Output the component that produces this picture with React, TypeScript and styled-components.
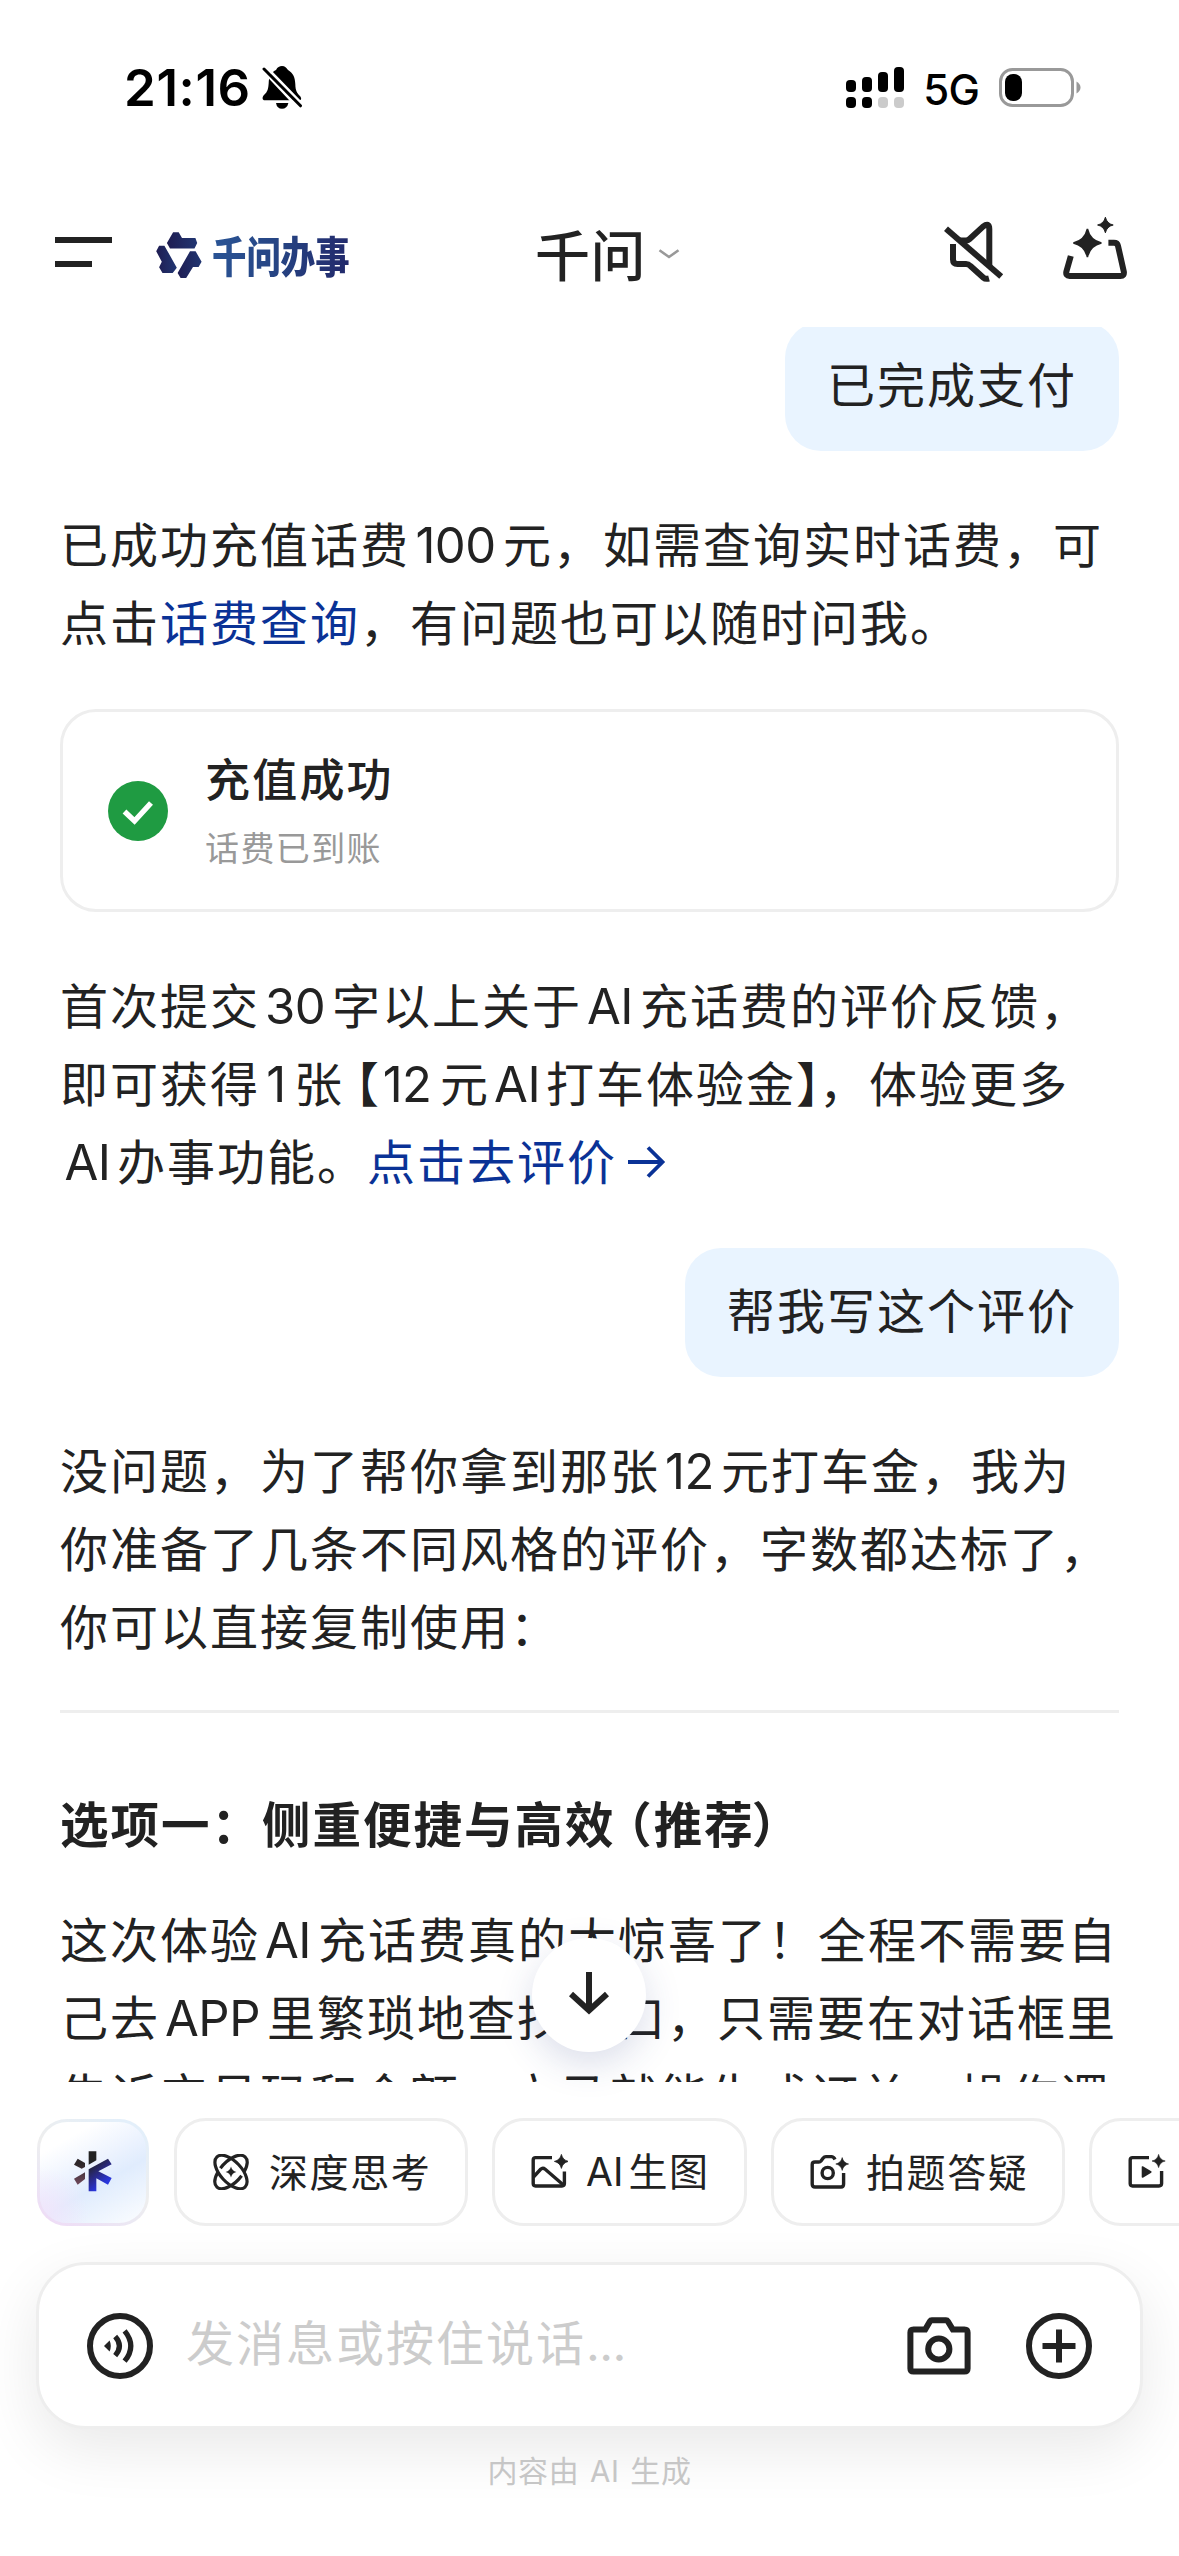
import React from 'react';
import styled, { createGlobalStyle } from 'styled-components';

const CJK = '"Noto Sans CJK SC", "Noto Sans", sans-serif';
const LATIN = 'Inter, "Noto Sans CJK SC", sans-serif';
const INK = '#222222';
const LINK = '#0a3296';

const GlobalStyle = createGlobalStyle`
  * { box-sizing: border-box; }
  html, body { margin: 0; padding: 0; background: #fff; }
  svg { display: block; flex: none; }
`;

const Screen = styled.div`
  position: relative;
  display: flex;
  flex-direction: column;
  width: 1179px;
  height: 2556px;
  overflow: hidden;
  background: #fff;
  color: ${INK};
  font-family: ${CJK};
`;

/* ---------- status bar ---------- */

const StatusBar = styled.header`
  display: flex;
  align-items: center;
  justify-content: space-between;
  height: 176px;
  padding: 0 98px 0 124px;
  color: #000;
  font-family: ${LATIN};
`;

const StatusGroup = styled.div<{ $gap: number }>`
  display: flex;
  align-items: center;
  gap: ${(p) => p.$gap}px;
`;

const Clock = styled.span`
  font-size: 51px;
  font-weight: 600;
  line-height: 60px;
  letter-spacing: 0.6px;
`;

const Network = styled.span`
  font-size: 42px;
  font-weight: 500;
  line-height: 50px;
  letter-spacing: -0.8px;
  margin: 3px 2px 0 -1px;
`;

/* ---------- navigation ---------- */

const NavBar = styled.nav`
  display: flex;
  align-items: center;
  height: 151px;
  padding: 7px 51px 0 55px;
`;

const Brand = styled.div`
  display: flex;
  align-items: center;
  gap: 10px;
  width: 379px;
  margin-left: 44px;
`;

const BrandName = styled.span`
  display: block;
  width: 140px;
  margin-top: -3px;
  font-size: 43px;
  font-weight: 900;
  line-height: 60px;
  white-space: nowrap;
  transform: scaleX(0.8);
  transform-origin: left center;
  background: linear-gradient(100deg, #2a5596 0%, #264382 50%, #22286a 100%);
  background-size: 172px 100%;
  padding-right: 36px;
  box-sizing: content-box;
  -webkit-background-clip: text;
  background-clip: text;
  color: transparent;
`;

const Title = styled.h1`
  display: flex;
  align-items: center;
  gap: 12px;
  margin: -6px 0 0;
  font-size: 55px;
  font-weight: 500;
  line-height: 80px;
  letter-spacing: 0.5px;
`;

const NavActions = styled.div`
  display: flex;
  gap: 56px;
  margin-left: auto;
`;

/* ---------- conversation ---------- */

const Conversation = styled.main`
  height: 1755px;
  overflow: hidden;
  padding: 0 60px;
  font-size: 48px;
  letter-spacing: 2px;
`;

const Thread = styled.div`
  display: flex;
  flex-direction: column;
  margin-top: -5px;
`;

const Bubble = styled.div`
  align-self: flex-end;
  height: 129px;
  padding: 21px 42px 0 42px;
  border-radius: 36px;
  background: #e9f4ff;
  line-height: 78px;
`;

const Paragraph = styled.p<{ $top: number }>`
  margin: ${(p) => p.$top}px 0 0;
`;

const Line = styled.span`
  display: block;
  height: 78px;
  line-height: 78px;
  white-space: nowrap;
`;

const Latin = styled.span<{ $w: number; $trail?: number }>`
  display: inline-block;
  width: ${(p) => p.$w}px;
  padding-right: ${(p) => p.$trail ?? 2}px;
  text-align: center;
  font-family: ${LATIN};
  font-size: 49px;
  line-height: 1;
  letter-spacing: -0.5px;
`;

/* half-width form of a full-width bracket */
const Bracket = styled.span<{ $before?: number; $after?: number }>`
  margin-left: ${(p) => p.$before ?? 0}px;
  margin-right: ${(p) => p.$after ?? 0}px;
  font-feature-settings: 'halt' 1;
`;

const Anchor = styled.a`
  color: ${LINK};
`;

const InlineArrow = styled.svg`
  display: inline-block;
  margin-left: 11px;
  vertical-align: 2px;
`;

const ResultCard = styled.section`
  display: flex;
  align-items: center;
  gap: 37px;
  height: 203px;
  margin-top: 50px;
  padding-left: 45px;
  border: 3px solid #eeeeee;
  border-radius: 36px;
`;

const ResultText = styled.div`
  display: flex;
  flex-direction: column;
  gap: 9px;
  margin-top: -2px;
`;

const ResultTitle = styled.strong`
  font-size: 45px;
  font-weight: 500;
  line-height: 66px;
  letter-spacing: 2.2px;
`;

const ResultNote = styled.span`
  color: #999;
  font-size: 34px;
  line-height: 54px;
  letter-spacing: 1.4px;
`;

const Spacer = styled.div<{ $h: number }>`
  height: ${(p) => p.$h}px;
`;

const Divider = styled.hr`
  width: 100%;
  height: 3px;
  margin: 47px 0 0;
  border: 0;
  background: #eeeeee;
`;

const Heading = styled.h2`
  margin: 70px 0 0;
  font-size: 48.5px;
  font-weight: 600;
  height: 78px;
  line-height: 78px;
  white-space: nowrap;
`;

const ScrollDown = styled.button`
  position: absolute;
  left: 532px;
  top: 1938px;
  display: flex;
  align-items: center;
  justify-content: center;
  width: 114px;
  height: 114px;
  padding: 0 0 4px;
  border: 0;
  border-radius: 50%;
  background: #fff;
  box-shadow: 0 12px 36px rgba(40, 60, 130, 0.17);
`;

/* ---------- bottom dock ---------- */

const Dock = styled.footer`
  display: flex;
  flex-direction: column;
  padding: 36px 36px 0;
`;

const Chips = styled.div`
  display: flex;
  align-items: center;
  gap: 24px;
  height: 108px;
`;

const SparkChip = styled.button`
  display: flex;
  flex: none;
  align-items: center;
  justify-content: center;
  width: 112px;
  height: 107px;
  margin: 0 1px;
  padding: 0 0 2px;
  border: 3px solid transparent;
  border-radius: 30px;
  background:
    radial-gradient(circle at 0% 92%, rgba(243, 228, 251, 0.9) 0%, rgba(241, 232, 252, 0) 34%) padding-box,
    linear-gradient(150deg, #ffffff 20%, #ebf2fe 46%, #e0ecfd 60%, #f8fbff 94%) padding-box,
    linear-gradient(30deg, #eeddf6 8%, #ebe9f3 35%, #eeeeee 52%, #e3effa 90%) border-box;
`;

const Chip = styled.button<{ $w: number; $gap?: number }>`
  display: flex;
  flex: none;
  align-items: center;
  gap: ${(p) => p.$gap ?? 20}px;
  width: ${(p) => p.$w}px;
  height: 108px;
  padding: 0 0 0 36px;
  border: 3px solid #eeeeee;
  border-radius: 32px;
  background: #fff;
  color: ${INK};
  white-space: nowrap;
`;

const ChipLabel = styled.span`
  margin-top: -4px;
  font-family: ${CJK};
  font-size: 39px;
  line-height: 56px;
  letter-spacing: 1.6px;
`;

const ChipLatin = styled.span`
  margin-right: 5px;
  font-family: ${LATIN};
  letter-spacing: 0;
`;

const Composer = styled.div`
  display: flex;
  align-items: center;
  width: 1107px;
  height: 167px;
  margin-top: 36px;
  padding: 0 48px 0 48px;
  border: 3px solid #eeeeee;
  border-radius: 50px;
  background: #fff;
  box-shadow: 0 20px 60px rgba(0, 0, 0, 0.09);
`;

const Placeholder = styled.span`
  flex: 1;
  margin: -7px 0 0 33px;
  color: #cccccc;
  font-size: 48px;
  line-height: 78px;
  letter-spacing: 2px;
`;

const Dots = styled.span`
  font-family: ${LATIN};
  letter-spacing: -0.6px;
`;

const ComposerActions = styled.div`
  display: flex;
  align-items: center;
  gap: 55px;
`;

const Disclaimer = styled.p`
  position: relative;
  margin: 18px 0 0;
  color: #c6c6c6;
  font-size: 30px;
  line-height: 44px;
  letter-spacing: 0.7px;
  text-align: center;
`;

const DisclaimerLatin = styled.span`
  margin: 0 10.5px;
  font-family: ${LATIN};
  font-size: 29.5px;
`;

/* ---------- icons ---------- */

const starPath = (cx: number, cy: number, r: number) => {
  const k = r * 0.26;
  return `M${cx} ${cy - r}Q${cx + k * 0.7} ${cy - k * 0.7} ${cx + r} ${cy}Q${cx + k * 0.7} ${cy + k * 0.7} ${cx} ${cy + r}Q${cx - k * 0.7} ${cy + k * 0.7} ${cx - r} ${cy}Q${cx - k * 0.7} ${cy - k * 0.7} ${cx} ${cy - r}Z`;
};

const BellOff = () => (
  <svg width="41" height="44" viewBox="0 0 41 44">
    <path d="M20 0C23 0 24.5 2 26 4C31 7 33 11 33.3 18C33.5 25 35 27 38 30C40.2 33 39 34.3 37 34.3H3C0 34.3 0 31 2 29C5.5 26 6.5 23 6.8 15C7.5 9 10 6 14 4C15.5 1 17.5 0 20 0Z" />
    <path d="M14 37H26.4Q25 42.8 20 42.8Q15 42.8 14 37Z" />
    <path d="M1 4L37 42.5M4 1L40 38" stroke="#fff" strokeWidth="3" />
    <path d="M2 3L38.5 39.8" stroke="#000" strokeWidth="3" strokeLinecap="round" />
  </svg>
);

const Signal = () => (
  <svg width="60" height="42" viewBox="0 0 60 42">
    {[13, 10, 5, 0].map((y, i) => (
      <g key={y}>
        <rect x={i * 16} y={y} width="10" height={25 - y} rx="4" />
        <rect x={i * 16} y="30" width="10" height="11" rx="4" fill={i < 2 ? '#000' : '#cbcbcb'} />
      </g>
    ))}
  </svg>
);

const Battery = () => (
  <svg width="82" height="40" viewBox="0 0 82 40">
    <rect x="1.5" y="1.5" width="72" height="36" rx="12" fill="none" stroke="#999" strokeWidth="3" />
    <rect x="6" y="6" width="17" height="27" rx="8" />
    <path d="M77.5 13.5Q81.5 16 81.5 19.5Q81.5 23 77.5 25.5Z" fill="#999" />
  </svg>
);

const Menu = () => (
  <svg width="57" height="80" viewBox="0 0 57 80" fill={INK}>
    <rect y="22" width="57" height="6" />
    <rect y="46" width="37" height="6" />
  </svg>
);

const Logo = () => (
  <svg width="46" height="46" viewBox="0 0 46 46">
    <defs>
      <linearGradient id="logo" x1="0" y1="0" x2="1" y2="0" gradientUnits="objectBoundingBox">
        <stop offset="0" stopColor="#1f1d52" />
        <stop offset="1" stopColor="#213672" />
      </linearGradient>
    </defs>
    <g fill="url(#logo)" strokeLinejoin="round">
      <path d="M17.1 0.3H22.7L26 6H39.4L41.2 11L38.5 16.5H14L10.9 11Z" />
      <path d="M3.1 13.7H8.4L10.7 17.7L20.8 35.7L16.7 41H6.5L3.1 35.3L5.8 29.7L0.2 19.3Z" />
      <path d="M34 19.3H39.6L45.6 29.7L42.6 35H37L30.2 45.9H24.6L21.6 41Z" />
    </g>
  </svg>
);

const Chevron = () => (
  <svg width="22" height="12" viewBox="0 0 22 12" style={{ marginTop: 4 }}>
    <path d="M1.5 2.2L11 9L20.5 2.2" fill="none" stroke="#999" strokeWidth="2.6" />
  </svg>
);

const Muted = () => (
  <svg width="60" height="80" viewBox="0 -4 60 80" fill="none" stroke={INK} strokeWidth="6">
    <path d="M16 21.5H22Q24 21.5 25.6 20L39 7.6Q45.3 3 45.3 10V48" strokeLinejoin="round" />
    <path d="M9 25V40.5Q9 45 13.5 45H22Q24.5 45 26.5 47L39.5 58.7Q41.5 60.5 45 59.5" />
    <path d="M2 9.8L57.2 57.6" />
  </svg>
);

const MagicTray = () => (
  <svg width="68" height="80" viewBox="0 1 68 80">
    <path
      d="M10.8 42L6.4 57.5Q5.4 62 9.6 62H60.4Q64.6 62 63.8 57.5L58 31.8Q57.3 28.7 54 28.7H48.4"
      fill="none"
      stroke={INK}
      strokeWidth="6"
    />
    <path d={starPath(27.4, 29, 14)} fill={INK} stroke={INK} strokeWidth="1.6" />
    <path d={starPath(45.4, 11, 7.8)} fill={INK} stroke={INK} strokeWidth="1" />
  </svg>
);

const Success = () => (
  <svg width="60" height="60" viewBox="0 0 60 60">
    <circle cx="30" cy="30" r="30" fill="#1f9b42" />
    <path d="M16.5 30.5L26.5 40L43 22" fill="none" stroke="#fff" strokeWidth="5.4" />
  </svg>
);

const DownArrow = () => (
  <svg width="40" height="44" viewBox="0 0 40 44" fill="none" stroke={INK} strokeWidth="6">
    <path d="M20 1V40M2 23L20 39.5L38 23" />
  </svg>
);

const Spark = () => (
  <svg width="40" height="42" viewBox="160 152 120 126">
    <defs>
      <linearGradient id="spark" x1="190" y1="170" x2="262" y2="262" gradientUnits="userSpaceOnUse">
        <stop offset="0.25" stopColor="#222222" />
        <stop offset="0.62" stopColor="#2a2a8a" />
        <stop offset="0.9" stopColor="#2936dd" />
      </linearGradient>
      <linearGradient id="sparkLeft" x1="0" y1="178" x2="0" y2="256" gradientUnits="userSpaceOnUse">
        <stop offset="0.2" stopColor="#2d2629" />
        <stop offset="1" stopColor="#70495c" />
      </linearGradient>
    </defs>
    <path d="M207 156H230V183L207 196Z" fill="#222" />
    <path d="M207 210L265 178L276 195L236 216L276 236L265 256L230 237V276H207Z" fill="url(#spark)" />
    <path d="M174 178L196 191V203L186 208L163 196Z" fill="url(#sparkLeft)" />
    <path d="M196 219V239L174 256L163 238Z" fill="url(#sparkLeft)" />
  </svg>
);

const Atom = () => (
  <svg width="36" height="36" viewBox="-18 -18 36 36" fill="none" stroke={INK} strokeWidth="3.2">
    <ellipse rx="20.6" ry="10.6" transform="rotate(47)" />
    <g transform="rotate(-47)">
      <path d="M-4.5 -10.3A20.6 10.6 0 0 1 20.6 0A20.6 10.6 0 0 1 9.5 9.4" />
      <path d="M4.5 10.3A20.6 10.6 0 0 1 -20.6 0A20.6 10.6 0 0 1 -9.5 -9.4" />
    </g>
    <path d={starPath(0, 0, 5.4)} fill={INK} stroke="none" />
  </svg>
);

const Picture = () => (
  <svg width="37" height="36" viewBox="0 0 37 36" fill="none" stroke={INK} strokeWidth="3.4">
    <path d="M21 3.6H4.5Q2.2 3.6 2.2 6V29.6Q2.2 32 4.5 32H31Q33.4 32 33.4 29.6V17.5" />
    <path d="M2.5 23L9.6 15.3Q11.8 13.3 14.2 15.3L33 31.5" />
    <path d={starPath(30.4, 7.4, 7)} fill={INK} stroke={INK} strokeWidth="0.8" />
  </svg>
);

const CameraSpark = () => (
  <svg width="39" height="36" viewBox="0 0 39 36" fill="none" stroke={INK} strokeWidth="3.4">
    <path d="M25 5.4Q23.6 2.6 21.5 2.6H16Q14.2 2.6 13 4.2L11 7Q10.2 8 8.8 8H5Q2.2 8 2.2 10.5V30Q2.2 33 5 33H31Q33.6 33 33.6 30V19" />
    <circle cx="17.7" cy="19" r="5.6" />
    <path d={starPath(32.2, 10, 6.4)} fill={INK} stroke={INK} strokeWidth="0.6" />
  </svg>
);

const VideoSpark = () => (
  <svg width="38" height="36" viewBox="0 0 38 36" fill="none" stroke={INK} strokeWidth="3.4">
    <path d="M21 3.6H4.5Q2.2 3.6 2.2 6V29.6Q2.2 32 4.5 32H31Q33.6 32 33.6 29.6V17" />
    <path d="M14.5 13V23L22.8 18Z" fill={INK} stroke={INK} strokeWidth="1.6" strokeLinejoin="round" />
    <path d={starPath(30.6, 7, 6.6)} fill={INK} stroke={INK} strokeWidth="0.6" />
  </svg>
);

const Voice = () => (
  <svg width="66" height="66" viewBox="0 0 66 66" fill="none" stroke={INK} strokeWidth="5.2">
    <circle cx="33" cy="33" r="30" strokeWidth="6" />
    <path d="M17 33L22.6 27.6Q25 33 22.6 38.6Z" fill={INK} stroke="none" />
    <path d="M28.2 23.6Q36.6 33 28.2 42.6" />
    <path d="M37.6 17.8Q50 33 37.6 48.2" />
  </svg>
);

const Camera = () => (
  <svg width="64" height="64" viewBox="0 0 64 64" fill="none" stroke={INK} strokeWidth="6">
    <path d="M6.5 15.5H18.2L23 7.2Q23.6 6.2 24.8 6.2H39Q40.2 6.2 40.8 7.2L45.8 15.5H57.4Q60.6 15.5 60.6 18.5V54.6Q60.6 57.6 57.4 57.6H6.5Q3.4 57.6 3.4 54.6V18.5Q3.4 15.5 6.5 15.5Z" />
    <circle cx="31.8" cy="35" r="10.6" />
  </svg>
);

const Plus = () => (
  <svg width="66" height="66" viewBox="0 0 66 66" fill="none" stroke={INK} strokeWidth="6">
    <circle cx="33" cy="33" r="30" />
    <path d="M33 16.5V49.5M16.5 33H49.5" />
  </svg>
);

/* ---------- screen ---------- */

export default function App() {
  return (
    <Screen>
      <GlobalStyle />
      <StatusBar>
        <StatusGroup $gap={11}>
          <Clock>21:16</Clock>
          <BellOff />
        </StatusGroup>
        <StatusGroup $gap={18}>
          <Signal />
          <Network>5G</Network>
          <Battery />
        </StatusGroup>
      </StatusBar>

      <NavBar>
        <Menu />
        <Brand>
          <Logo />
          <BrandName>千问办事</BrandName>
        </Brand>
        <Title>
          千问
          <Chevron />
        </Title>
        <NavActions>
          <Muted />
          <MagicTray />
        </NavActions>
      </NavBar>

      <Conversation>
        <Thread>
          <Bubble>已完成支付</Bubble>

          <Paragraph $top={52}>
            <Line>
              已成功充值话费<Latin $w={93}>100</Latin>元，如需查询实时话费，可
            </Line>
            <Line>
              点击<Anchor>话费查询</Anchor>，有问题也可以随时问我。
            </Line>
          </Paragraph>

          <ResultCard>
            <Success />
            <ResultText>
              <ResultTitle>充值成功</ResultTitle>
              <ResultNote>话费已到账</ResultNote>
            </ResultText>
          </ResultCard>

          <Paragraph $top={52}>
            <Line>
              首次提交<Latin $w={72}>30</Latin>字以上关于<Latin $w={58}>AI</Latin>充话费的评价反馈，
            </Line>
            <Line>
              即可获得<Latin $w={34}>1</Latin>张<Bracket $before={11}>【</Bracket>
              <Latin $w={59} $trail={7}>12</Latin>元<Latin $w={56}>AI</Latin>打车体验金
              <Bracket $after={-3}>】</Bracket>，体验更多
            </Line>
            <Line>
              <Latin $w={57}>AI</Latin>办事功能。
              <Anchor>
                点击去评价
                <InlineArrow width="38" height="32" viewBox="0 0 38 32" fill="none" stroke={LINK} strokeWidth="3.8">
                  <path d="M0 16H34M20 1.5L34.5 16L20 30.5" />
                </InlineArrow>
              </Anchor>
            </Line>
          </Paragraph>

          <Spacer $h={50} />
          <Bubble>帮我写这个评价</Bubble>

          <Paragraph $top={52}>
            <Line>
              没问题，为了帮你拿到那张<Latin $w={61}>12</Latin>元打车金，我为
            </Line>
            <Line>你准备了几条不同风格的评价，字数都达标了，</Line>
            <Line>你可以直接复制使用：</Line>
          </Paragraph>

          <Divider />

          <Heading>
            选项一：侧重便捷与高效<Bracket $before={12}>（</Bracket>推荐<Bracket $before={-3}>）</Bracket>
          </Heading>

          <Paragraph $top={37}>
            <Line>
              这次体验<Latin $w={58}>AI</Latin>充话费真的太惊喜了！全程不需要自
            </Line>
            <Line>
              己去<Latin $w={107}>APP</Latin>里繁琐地查找入口，只需要在对话框里
            </Line>
            <Line>告诉它号码和金额，立马就能生成订单，操作逻</Line>
          </Paragraph>
        </Thread>
      </Conversation>

      <ScrollDown aria-label="回到底部">
        <DownArrow />
      </ScrollDown>

      <Dock>
        <Chips>
          <SparkChip>
            <Spark />
          </SparkChip>
          <Chip $w={294}>
            <Atom />
            <ChipLabel>深度思考</ChipLabel>
          </Chip>
          <Chip $w={255} $gap={18}>
            <Picture />
            <ChipLabel>
              <ChipLatin>AI</ChipLatin>生图
            </ChipLabel>
          </Chip>
          <Chip $w={294} $gap={17}>
            <CameraSpark />
            <ChipLabel>拍题答疑</ChipLabel>
          </Chip>
          <Chip $w={255}>
            <VideoSpark />
          </Chip>
        </Chips>

        <Composer>
          <Voice />
          <Placeholder>
            发消息或按住说话<Dots>...</Dots>
          </Placeholder>
          <ComposerActions>
            <Camera />
            <Plus />
          </ComposerActions>
        </Composer>

        <Disclaimer>
          内容由<DisclaimerLatin>AI</DisclaimerLatin>生成
        </Disclaimer>
      </Dock>
    </Screen>
  );
}
